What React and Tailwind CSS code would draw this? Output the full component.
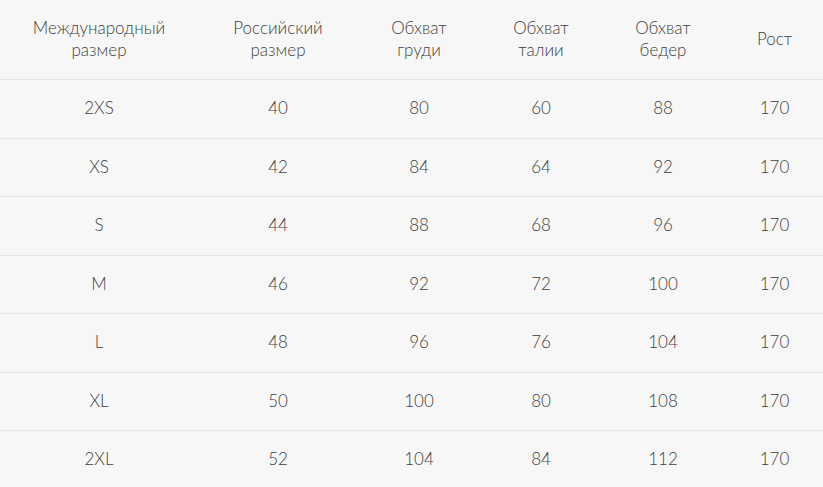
const headers = [
  ["Международный", "размер"],
  ["Российский", "размер"],
  ["Обхват", "груди"],
  ["Обхват", "талии"],
  ["Обхват", "бедер"],
  ["Рост"],
];

const rows = [
  ["2XS", "40", "80", "60", "88", "170"],
  ["XS", "42", "84", "64", "92", "170"],
  ["S", "44", "88", "68", "96", "170"],
  ["M", "46", "92", "72", "100", "170"],
  ["L", "48", "96", "76", "104", "170"],
  ["XL", "50", "100", "80", "108", "170"],
  ["2XL", "52", "104", "84", "112", "170"],
];

const cols = "grid grid-cols-[198px_160px_122px_122px_122px_101px]";

const App = () => {
  return (
    <div className="w-[823px] h-[487px] overflow-hidden bg-[#f7f7f7] text-[#3f3f3f] text-[17px] font-light font-['Lato',sans-serif]">
      <div className={`${cols} h-[80px] border-b border-[#e6e6e6]`}>
        {headers.map((h, i) => (
          <div key={i} className="flex flex-col items-center justify-center pb-[2px] leading-[22px] text-center">
            {h.map((t) => (
              <span key={t}>{t}</span>
            ))}
          </div>
        ))}
      </div>
      {rows.map((r, i) => (
        <div key={i} className={`${cols} h-[58.5px] border-b border-[#e6e6e6]`}>
          {r.map((c, j) => (
            <div key={j} className="flex items-center justify-center pb-[2px]">
              {c}
            </div>
          ))}
        </div>
      ))}
    </div>
  );
};

export default App;
